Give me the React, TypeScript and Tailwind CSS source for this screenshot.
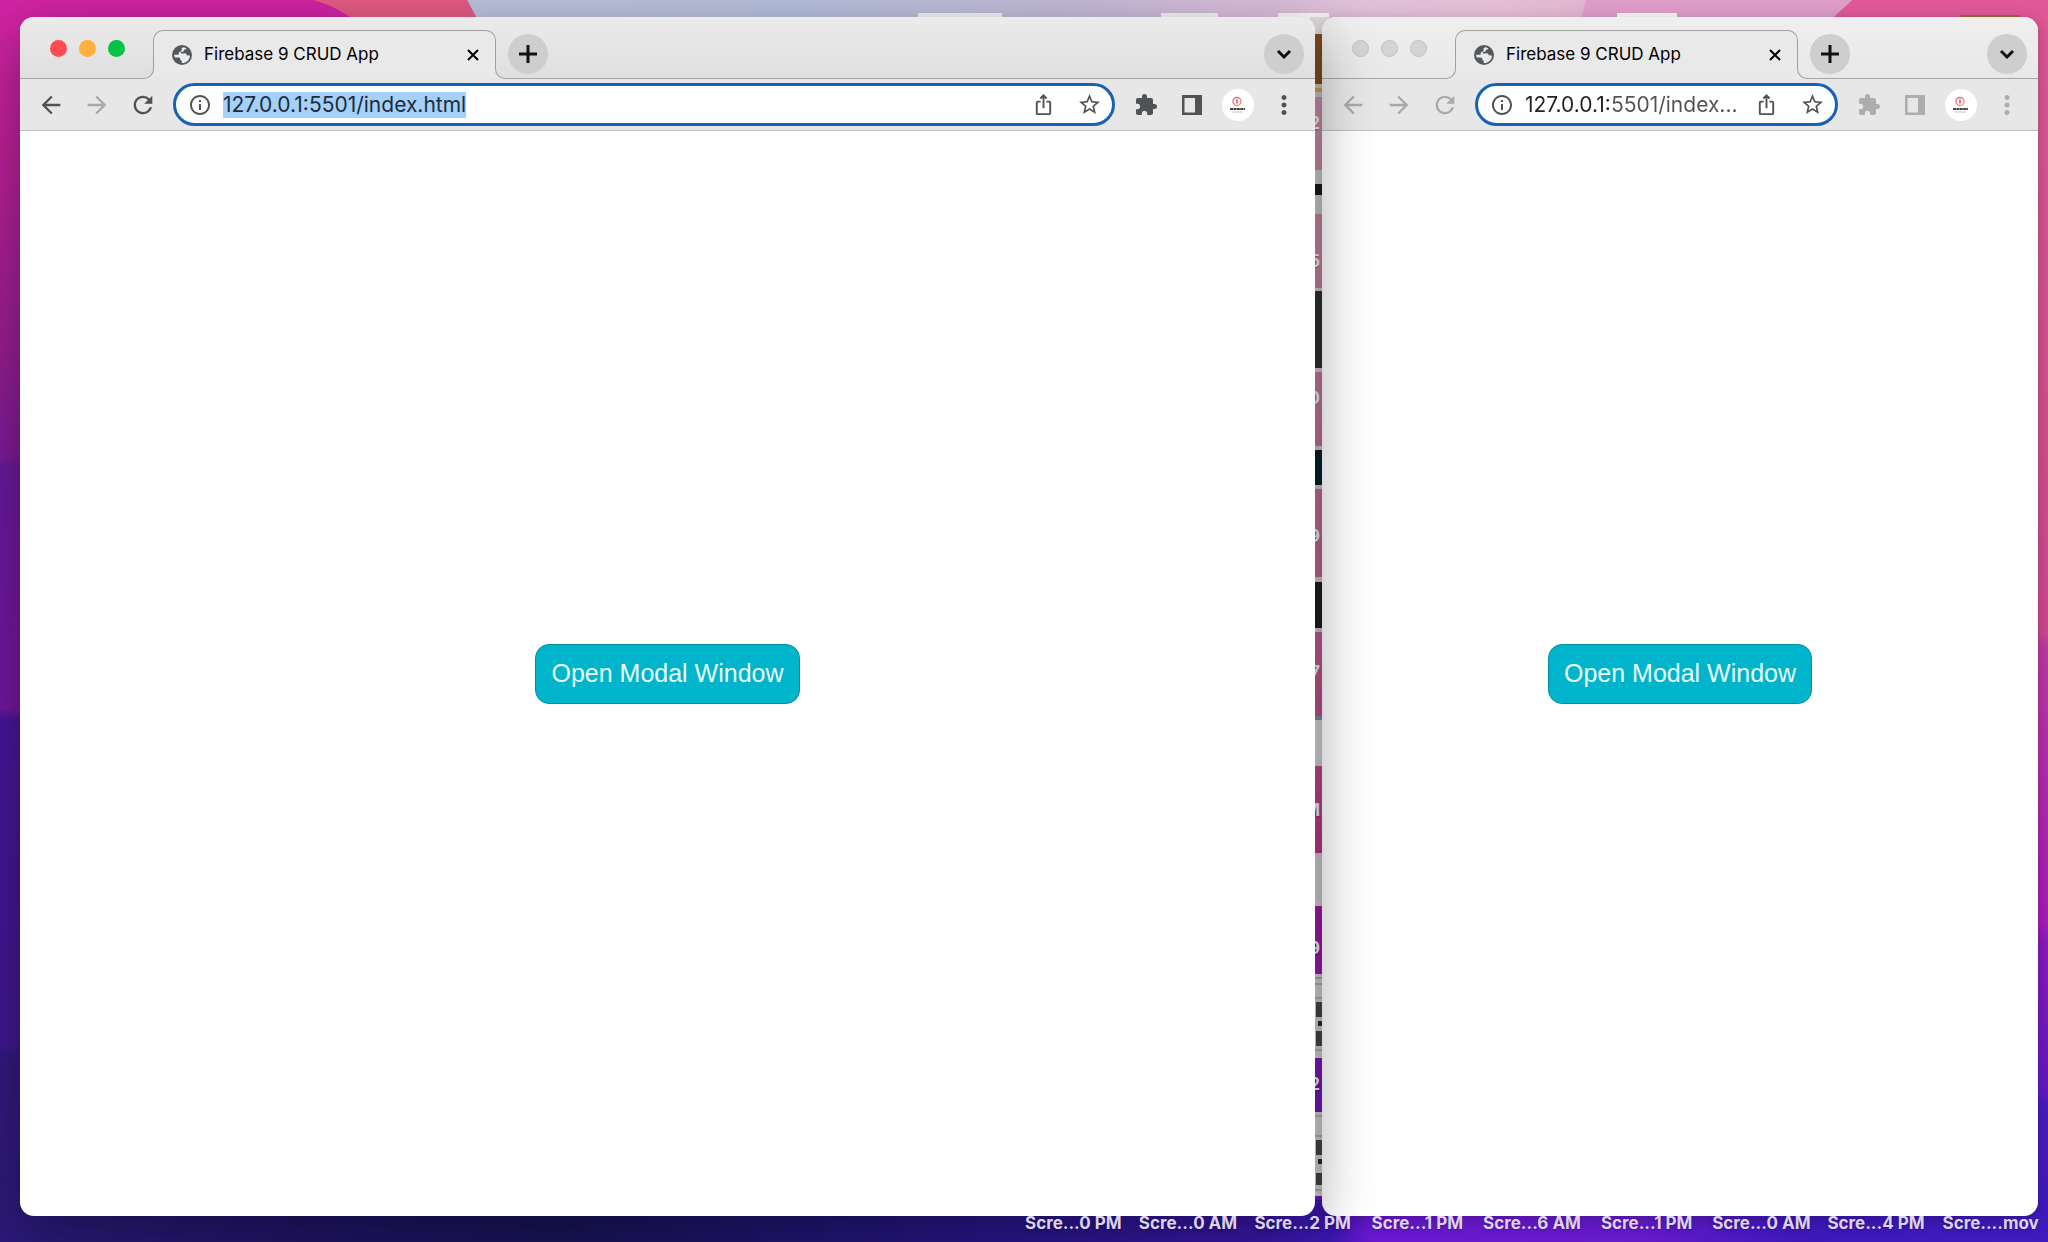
import { useState } from 'react'
import {
  MdArrowBack,
  MdArrowForward,
  MdExtension,
  MdInfoOutline,
  MdIosShare,
  MdMoreVert,
  MdRefresh,
  MdStarBorder,
} from 'react-icons/md'
import { clsx } from 'clsx'

const desktopFiles = [
  'Scre...0 PM',
  'Scre...0 AM',
  'Scre...2 PM',
  'Scre...1 PM',
  'Scre...6 AM',
  'Scre...1 PM',
  'Scre...0 AM',
  'Scre...4 PM',
  'Scre....mov',
]

// Slices of the desktop icon column that show between the two windows
const thumbnails = [
  { top: 17, height: 17, fill: '#e4dfe2' },
  { top: 34, height: 50, fill: '#87511f' },
  { top: 84, height: 4, fill: '#d8d0c4' },
  { top: 88, height: 4, fill: '#d9a95c' },
  { top: 92, height: 5, fill: '#d4d2d4' },
  { top: 170, height: 14, fill: '#d2d6d4' },
  { top: 184, height: 11, fill: '#1b1b1b' },
  { top: 195, height: 19, fill: '#d0d4d3' },
  { top: 288, height: 3, fill: '#e4ccd8' },
  { top: 291, height: 77, fill: '#353435' },
  { top: 368, height: 4, fill: '#e4ccd8' },
  { top: 446, height: 4, fill: '#e4ccd8' },
  { top: 450, height: 35, fill: '#06222c' },
  { top: 485, height: 4, fill: '#e4ccd8' },
  { top: 577, height: 5, fill: '#e4ccd8' },
  { top: 582, height: 46, fill: '#1f1f1f' },
  { top: 628, height: 4, fill: '#e4ccd8' },
  { top: 716, height: 4, fill: '#7c9a98' },
  { top: 720, height: 41, fill: '#dde1e1' },
  { top: 761, height: 5, fill: '#e8d6e0' },
  { top: 853, height: 4, fill: '#e4ccde' },
  { top: 857, height: 44, fill: '#d8d8d8' },
  { top: 901, height: 5, fill: '#e4d6e8' },
  { top: 974, height: 84, fill: '#dcdcdc' },
  { top: 1112, height: 84, fill: '#dcdcdc' },
]

const cutLabels = [
  { y: 127, text: '2' },
  { y: 265, text: '5' },
  { y: 402, text: '0' },
  { y: 540, text: '9' },
  { y: 676, text: '7' },
  { y: 814, text: 'M' },
  { y: 952, text: '9' },
  { y: 1088, text: '2' },
]

function Wallpaper() {
  return (
    <svg
      className="absolute inset-0 h-full w-full"
      viewBox="0 0 2048 1242"
      preserveAspectRatio="none"
      aria-hidden="true"
    >
      <defs>
        <linearGradient id="left" x1="0" y1="0" x2="0" y2="1">
          <stop offset="0" stopColor="#d424a6" />
          <stop offset="0.12" stopColor="#bd2198" />
          <stop offset="0.27" stopColor="#9a1f92" />
          <stop offset="0.37" stopColor="#7d1b98" />
          <stop offset="0.375" stopColor="#6b199b" />
          <stop offset="0.57" stopColor="#74189f" />
          <stop offset="0.58" stopColor="#47169a" />
          <stop offset="0.84" stopColor="#401891" />
          <stop offset="0.85" stopColor="#341980" />
          <stop offset="1" stopColor="#2b1a7a" />
        </linearGradient>
        <linearGradient id="right" x1="0" y1="0" x2="0" y2="1">
          <stop offset="0" stopColor="#e05896" />
          <stop offset="0.2" stopColor="#d4568f" />
          <stop offset="0.51" stopColor="#d04890" />
          <stop offset="0.52" stopColor="#be3aa2" />
          <stop offset="0.74" stopColor="#a81cb8" />
          <stop offset="0.76" stopColor="#8a1abc" />
          <stop offset="0.88" stopColor="#6218c4" />
          <stop offset="0.89" stopColor="#4a1ac4" />
          <stop offset="1" stopColor="#401abf" />
        </linearGradient>
        <linearGradient id="gap" x1="0" y1="0" x2="0" y2="1">
          <stop offset="0" stopColor="#d69cba" />
          <stop offset="0.23" stopColor="#cf88a8" />
          <stop offset="0.46" stopColor="#c86c98" />
          <stop offset="0.62" stopColor="#c84c92" />
          <stop offset="0.69" stopColor="#c43894" />
          <stop offset="0.72" stopColor="#a81cae" />
          <stop offset="0.8" stopColor="#a01cb4" />
          <stop offset="0.88" stopColor="#7a18c4" />
          <stop offset="1" stopColor="#6c18cc" />
        </linearGradient>
        <linearGradient id="sky" x1="0" y1="0" x2="1" y2="0">
          <stop offset="0" stopColor="#bfc4df" />
          <stop offset="0.25" stopColor="#b9c2e0" />
          <stop offset="0.45" stopColor="#c8bddb" />
          <stop offset="0.56" stopColor="#dcc0dc" />
          <stop offset="0.75" stopColor="#e3bdd5" />
          <stop offset="1" stopColor="#d99ac4" />
        </linearGradient>
        <linearGradient id="floor" x1="0" y1="0" x2="1" y2="0">
          <stop offset="0" stopColor="#2b1a7a" />
          <stop offset="0.12" stopColor="#211468" />
          <stop offset="0.25" stopColor="#181458" />
          <stop offset="0.5" stopColor="#2b1690" />
          <stop offset="0.64" stopColor="#3c17b0" />
          <stop offset="0.66" stopColor="#6a18d0" />
          <stop offset="0.8" stopColor="#641aca" />
          <stop offset="0.87" stopColor="#3f18ba" />
          <stop offset="1" stopColor="#401abf" />
        </linearGradient>
      </defs>
      <rect width="1024" height="1242" fill="url(#left)" />
      <rect x="1400" width="648" height="1242" fill="url(#right)" />
      <rect x="1000" width="400" height="1242" fill="url(#gap)" />
      <rect x="60" y="1200" width="1988" height="42" fill="url(#floor)" />
      <path d="M314 0H467L480 24H360Q340 8 314 0Z" fill="#e65c84" />
      <path d="M467 0H1852L1826 24H480Z" fill="url(#sky)" />
      <path d="M1586 0H1852L1826 24H1580Z" fill="#dc9cc6" />
      <path d="M918 13h84v8h-84zM1161 13h57v8h-57zM1278 13h51v8h-51zM1617 13h60v8h-60z" fill="#f8f6f9" />
      <rect x="1960" y="15" width="60" height="5" fill="#a8642c" />
      {thumbnails.map((t) => (
        <rect key={t.top} x="1310" y={t.top} width="20" height={t.height} fill={t.fill} />
      ))}
      <path d="M1310 978h20M1310 984h20M1310 998h20M1310 1050h20M1310 1116h20M1310 1136h20M1310 1190h20" stroke="#8c8e8e" />
      <path d="M1316 1002h7v15h-7zM1316 1031h6v15h-6zM1316 1140h7v15h-7zM1316 1173h6v12h-6z" fill="#4a4a4a" />
      <path d="M1318 1021h4v5h-4zM1318 1159h4v5h-4z" fill="#2c2c2c" />
    </svg>
  )
}

function GlobeIcon() {
  return (
    <svg width="20" height="20" viewBox="0 0 20 20" aria-hidden="true">
      <circle cx="10" cy="10" r="10" fill="#55585c" />
      <path
        d="M11.8 2.2C10 2.5 9.3 3.6 9.6 4.8c.2 1-.4 1.7-1.5 1.9-1.3.2-1.5 1-1.3 2 .1.7-.3 1.1-1 1.1H2c.2 1 .5 2 1 2.800h3.300c1.300 0 2 .6 2 1.700 0 .9.6 1.400 1.500 1.500v2.200c4.600.2 8.100-3.300 8.200-7.600h-2c-.7 0-1.200-.4-1.500-1-.4-.9-1.200-1.200-2.300-1H9.400c-.5 0-.8-.3-.8-.8 0-.6.4-.9 1-.9h1.200c.6 0 .9-.3.9-.9 0-.8.5-1.200 1.300-1.200.9 0 1.300-.5 1.300-1.200-.7-.6-1.600-1-2.500-1.200z"
        fill="#ececec"
      />
    </svg>
  )
}

function SidePanelIcon() {
  return (
    <svg width="20" height="20" viewBox="0 0 20 20" fill="currentColor" aria-hidden="true">
      <path fillRule="evenodd" d="M0 0h20v20H0zM2.500 3v14.500H13V3z" />
    </svg>
  )
}

function Avatar() {
  return (
    <svg width="32" height="32" viewBox="0 0 32 32" aria-hidden="true">
      <defs>
        <linearGradient id="ring" x1="0" y1="0" x2="1" y2="1">
          <stop offset="0" stopColor="#d94fb0" />
          <stop offset="1" stopColor="#f29a3c" />
        </linearGradient>
      </defs>
      <circle cx="16" cy="16" r="16" fill="#fff" />
      <circle cx="15" cy="12.500" r="4" fill="none" stroke="url(#ring)" strokeWidth="1.300" />
      <path d="M15 10.500v4" stroke="#e2584a" strokeWidth="1.600" />
      <path d="M8 20h15" stroke="#454545" strokeWidth="2" strokeDasharray="3 .4" />
      <path d="M10 23h11" stroke="#c4c4c4" />
    </svg>
  )
}

interface CircleButtonProps {
  label: string
  path: string
  className?: string
}

function CircleButton({ label, path, className }: CircleButtonProps) {
  return (
    <button
      type="button"
      aria-label={label}
      className={clsx('flex size-10 shrink-0 items-center justify-center rounded-full bg-[#cecece]', className)}
    >
      <svg width="20" height="20" viewBox="0 0 20 20" fill="none" stroke="currentColor" strokeWidth="3" aria-hidden="true">
        <path d={path} />
      </svg>
    </button>
  )
}

interface WindowProps {
  url: string
  active?: boolean
  className?: string
}

function BrowserWindow({ url, active = false, className }: WindowProps) {
  const [address, setAddress] = useState(url)
  const lights = active ? ['bg-[#fe4b52]', 'bg-[#fdb03c]', 'bg-[#05c344]'] : ['bg-[#d4d4d4]', 'bg-[#d4d4d4]', 'bg-[#d4d4d4]']
  const iconButton = 'flex w-[46px] shrink-0 items-center justify-center'

  return (
    <section
      aria-label="Firebase 9 CRUD App"
      className={clsx('flex min-w-0 flex-col overflow-hidden rounded-[14px] bg-white', className)}
    >
      <header
        className={clsx(
          'flex h-[62px] shrink-0 border-b border-[#a6a6a6] bg-linear-to-b',
          active ? 'from-[#ebebeb] to-[#dfdfdf]' : 'from-[#efefef] to-[#e8e8e8]',
        )}
      >
        <div className="flex w-[133px] shrink-0 items-start gap-3 pt-[23px] pl-[30px]">
          {lights.map((color, i) => (
            <button
              key={i}
              type="button"
              aria-label={['Close window', 'Minimize window', 'Zoom window'][i]}
              className={clsx('size-[17px] rounded-full', color, !active && 'border border-[#c2c2c2]')}
            />
          ))}
        </div>
        <div className="relative mt-[13px] -mb-px flex w-[343px] shrink-0 items-center rounded-t-[10px] border border-b-0 border-[#a0a0a0] bg-[#e9e9e9] pl-[18px] text-[17px] text-black">
          <span className="absolute bottom-0 -left-[11px] size-[11px] bg-[#e9e9e9]">
            <span
              className={clsx(
                'block size-full rounded-br-[10px] border-r border-b border-[#a0a0a0]',
                active ? 'bg-[#e0e0e0]' : 'bg-[#e9e9e9]',
              )}
            />
          </span>
          <span className="absolute -right-[11px] bottom-0 size-[11px] bg-[#e9e9e9]">
            <span
              className={clsx(
                'block size-full rounded-bl-[10px] border-b border-l border-[#a0a0a0]',
                active ? 'bg-[#e0e0e0]' : 'bg-[#e9e9e9]',
              )}
            />
          </span>
          <GlobeIcon />
          <span className="ml-3 flex-1 whitespace-nowrap">Firebase 9 CRUD App</span>
          <button type="button" aria-label="Close tab" className="mr-4">
            <svg width="12" height="12" viewBox="0 0 12 12" stroke="currentColor" strokeWidth="2" aria-hidden="true">
              <path d="M1 1l10 10M11 1L1 11" />
            </svg>
          </button>
        </div>
        <CircleButton label="New tab" path="M10 1v18M1 10h18" className="mt-[17px] ml-3 text-[#111]" />
        <CircleButton label="Search tabs" path="M4 7l6 6 6-6" className="mt-[17px] mr-[11px] ml-auto text-[#111]" />
      </header>

      <div className="flex h-[52px] shrink-0 items-center border-b border-[#bdbdbd] bg-[#e7e7e7] pr-2 pl-2">
        <div className={clsx('flex', active ? 'text-[#4f5154]' : 'text-[#aaa]')}>
          <button type="button" aria-label="Back" className={iconButton}>
            <MdArrowBack size={28} />
          </button>
          <button type="button" aria-label="Forward" className={clsx(iconButton, 'text-[#a8a8a8]')}>
            <MdArrowForward size={28} />
          </button>
          <button type="button" aria-label="Reload" className={iconButton}>
            <MdRefresh size={28} />
          </button>
        </div>
        <div className="ml-[7px] flex h-[43px] min-w-0 flex-1 items-center rounded-full border-3 border-[#1762b4] bg-white text-[#505356]">
          <button type="button" aria-label="View site information" className="ml-3 shrink-0">
            <MdInfoOutline size={24} />
          </button>
          <div className="ml-[11px] flex min-w-0 flex-1">
            <input
              aria-label="Address"
              value={address}
              onChange={(e) => setAddress(e.target.value)}
              className={clsx(
                'field-sizing-content h-[26px] max-w-full min-w-0 text-[21px] outline-none',
                active
                  ? 'bg-[#a4d1fa] text-[#1d2c3c]'
                  : 'bg-[linear-gradient(90deg,#202124_84px,#505356_84px)] bg-clip-text text-transparent',
              )}
            />
          </div>
          <button type="button" aria-label="Share this page" className="flex w-[46px] shrink-0 justify-center">
            <MdIosShare size={23} />
          </button>
          <button type="button" aria-label="Bookmark this tab" className="flex w-[46px] shrink-0 justify-center">
            <MdStarBorder size={25} />
          </button>
        </div>
        <div className={clsx('ml-2 flex', active ? 'text-[#505356]' : 'text-[#adadad]')}>
          <button type="button" aria-label="Extensions" className={iconButton}>
            <MdExtension size={24} />
          </button>
          <button type="button" aria-label="Side panel" className={iconButton}>
            <SidePanelIcon />
          </button>
          <button type="button" aria-label="Profile" className={iconButton}>
            <Avatar />
          </button>
          <button type="button" aria-label="Menu" className={iconButton}>
            <MdMoreVert size={30} />
          </button>
        </div>
      </div>

      <main className="flex flex-1 items-center justify-center">
        <button
          type="button"
          className="h-[60px] rounded-[14px] border border-[#0a8d9c] bg-[#00b4cb] px-[15px] font-['Liberation_Sans',Arial,sans-serif] text-[25px] text-[#e9fdff]"
        >
          Open Modal Window
        </button>
      </main>
    </section>
  )
}

export default function App() {
  return (
    <div className="relative flex h-screen flex-col overflow-hidden font-[Inter,'Noto_Sans',sans-serif]">
      <Wallpaper />
      {cutLabels.map((label) => (
        <span
          key={label.y}
          className="absolute right-[728px] -translate-y-1/2 text-[17px] leading-5 font-bold text-white text-shadow-sm"
          style={{ top: label.y - 4 }}
        >
          {label.text}
        </span>
      ))}
      <div className="relative flex flex-1 gap-[7px] pt-[17px] pr-[10px] pl-5">
        <BrowserWindow
          active
          url="127.0.0.1:5501/index.html"
          className="z-10 flex-[1295] shadow-[0_16px_60px_rgba(0,0,0,0.38)]"
        />
        <BrowserWindow url="127.0.0.1:5501/index..." className="flex-[716] shadow-[0_4px_16px_rgba(0,0,0,0.25)]" />
      </div>
      <footer className="relative z-20 ml-auto grid h-[26px] w-[1032px] grid-cols-9 text-center text-[17px] leading-[14px] font-bold whitespace-nowrap text-[#ddd3ea] text-shadow-md">
        {desktopFiles.map((name, i) => (
          <span key={i}>{name}</span>
        ))}
      </footer>
    </div>
  )
}
